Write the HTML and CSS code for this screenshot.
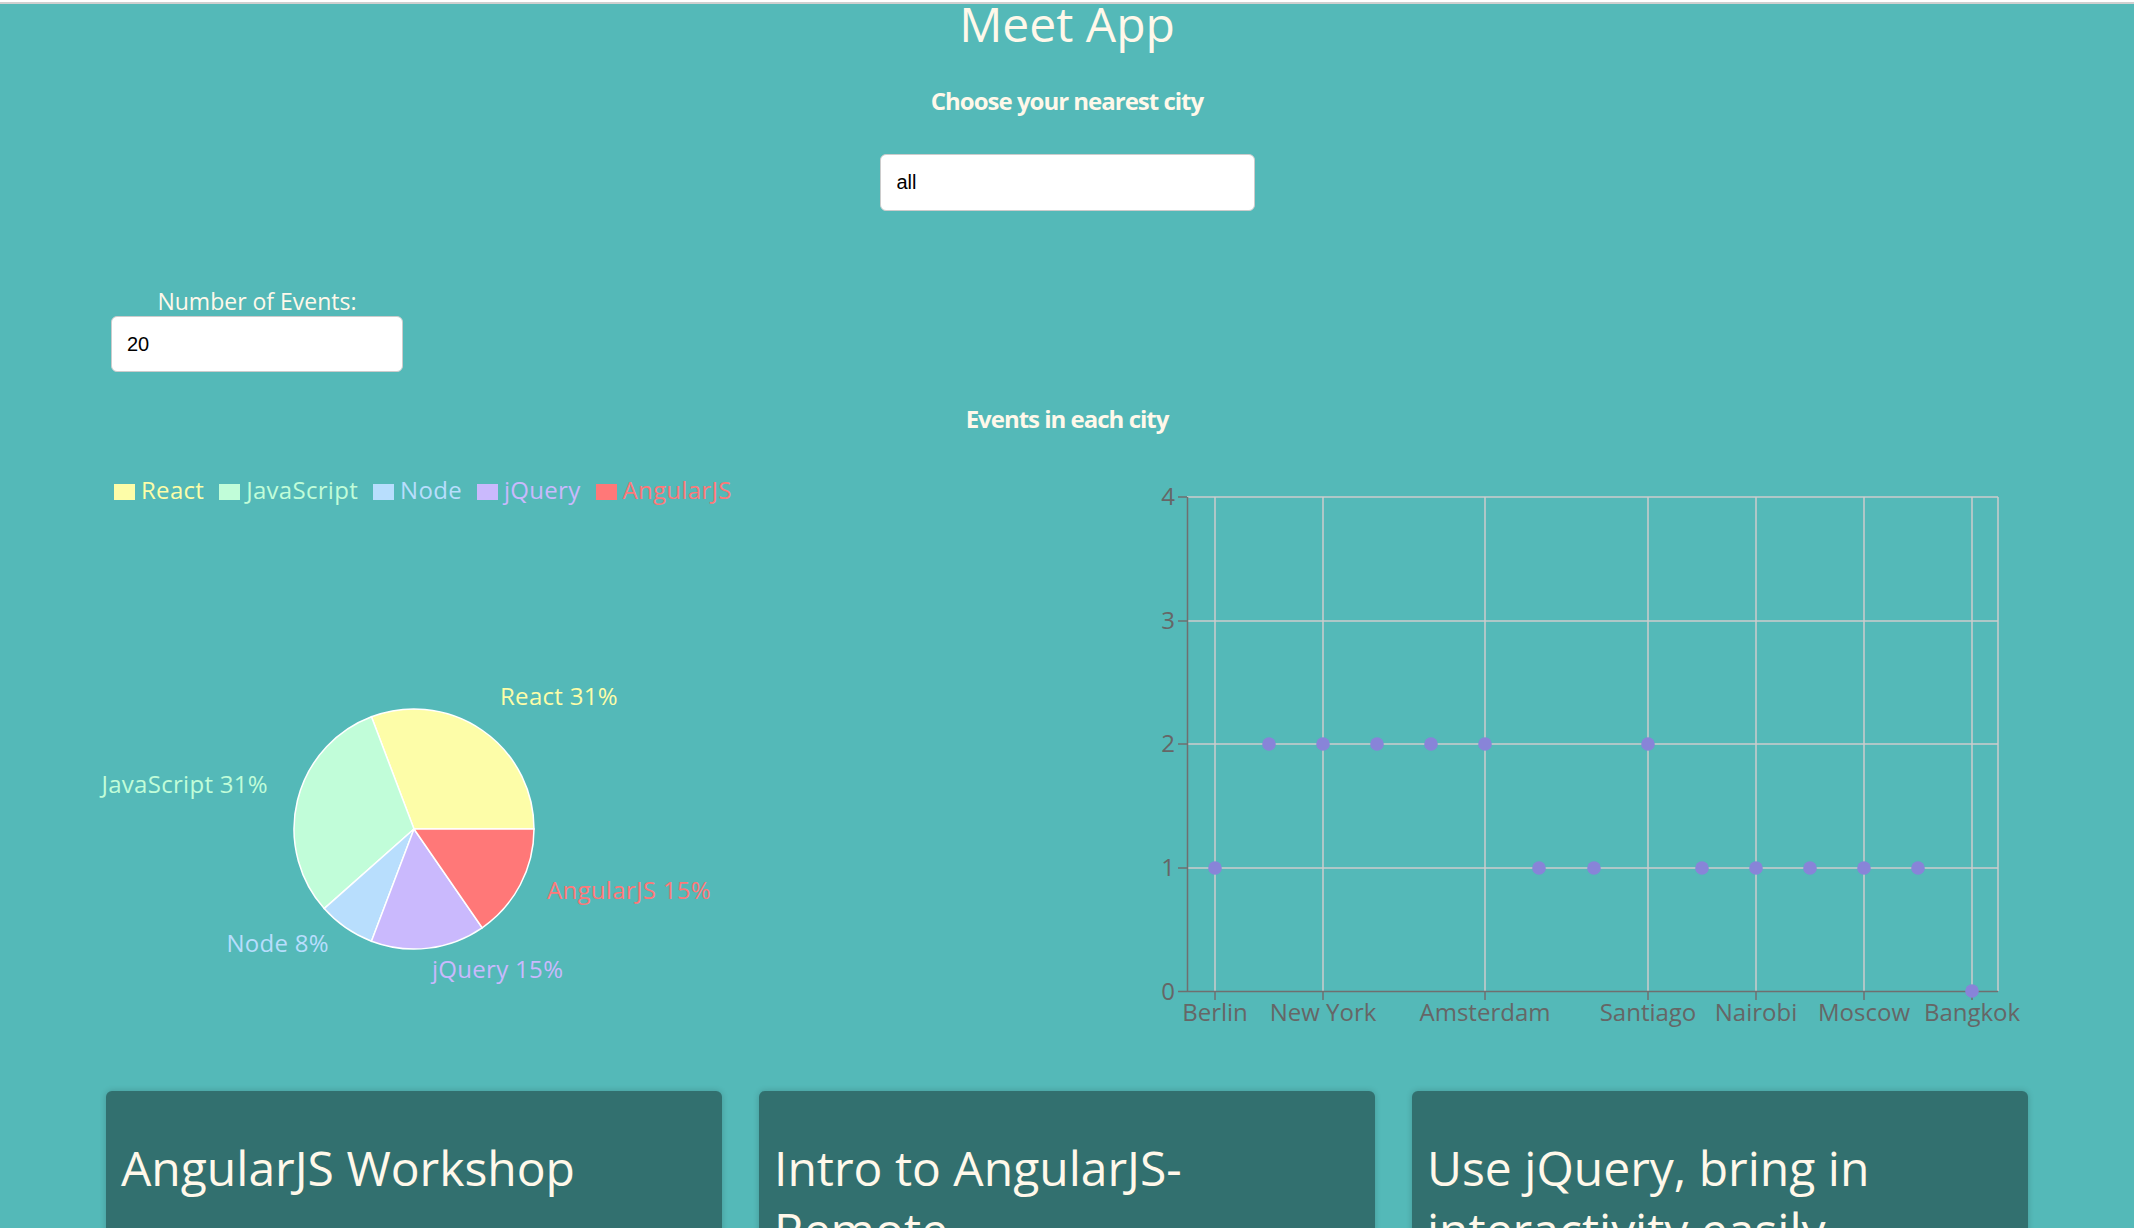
FILE: index.html
```html
<!DOCTYPE html>
<html lang="en">
<head>
<meta charset="utf-8">
<title>Meet App</title>
<link rel="stylesheet" href="styles.css">
</head>
<body>
<div class="app">
  <h1 class="title">Meet App</h1>

  <div class="city-search">
    <h3 class="section-heading choose">Choose your nearest city</h3>
    <input class="city-input" type="text" value="all">
  </div>

  <div class="number-of-events">
    <label class="noe-label">Number of Events:</label>
    <input class="noe-input" type="text" value="20">
  </div>

  <h3 class="section-heading charts-heading">Events in each city</h3>

  <div class="data-vis">
    <div class="pie-wrap">
      <ul class="legend">
        <li class="legend-item c-react"><span class="swatch"></span>React</li>
        <li class="legend-item c-js"><span class="swatch"></span>JavaScript</li>
        <li class="legend-item c-node"><span class="swatch"></span>Node</li>
        <li class="legend-item c-jquery"><span class="swatch"></span>jQuery</li>
        <li class="legend-item c-angular"><span class="swatch"></span>AngularJS</li>
      </ul>
      <svg class="pie" width="616" height="524" viewBox="106 506 616 524">
        <g stroke="#ffffff" stroke-width="1.5">
          <path fill="#fdfda8" d="M414,829 L534,829 A120,120 0 0 0 371.45,716.8 Z"/>
          <path fill="#c1fdd9" d="M414,829 L371.45,716.8 A120,120 0 0 0 324.18,908.57 Z"/>
          <path fill="#b8defd" d="M414,829 L324.18,908.57 A120,120 0 0 0 371.45,941.2 Z"/>
          <path fill="#cab9fd" d="M414,829 L371.45,941.2 A120,120 0 0 0 482.17,927.76 Z"/>
          <path fill="#ff7878" d="M414,829 L482.17,927.76 A120,120 0 0 0 534,829 Z"/>
        </g>
        <g class="pie-labels">
          <text x="500" y="705" fill="#fdfda8" text-anchor="start">React 31%</text>
          <text x="268" y="793" fill="#c1fdd9" text-anchor="end">JavaScript 31%</text>
          <text x="329" y="952" fill="#b8defd" text-anchor="end">Node 8%</text>
          <text x="432" y="978" fill="#cab9fd" text-anchor="start">jQuery 15%</text>
          <text x="547" y="899" fill="#ff7878" text-anchor="start">AngularJS 15%</text>
        </g>
      </svg>
    </div>

    <svg class="scatter" width="908" height="580" viewBox="1120 460 908 580">
      <g stroke="#cccccc" stroke-width="1.5">
        <line x1="1187" y1="497" x2="1998" y2="497"/>
        <line x1="1187" y1="621" x2="1998" y2="621"/>
        <line x1="1187" y1="744" x2="1998" y2="744"/>
        <line x1="1187" y1="868" x2="1998" y2="868"/>
        <line x1="1215" y1="497" x2="1215" y2="991"/>
        <line x1="1323" y1="497" x2="1323" y2="991"/>
        <line x1="1485" y1="497" x2="1485" y2="991"/>
        <line x1="1648" y1="497" x2="1648" y2="991"/>
        <line x1="1756" y1="497" x2="1756" y2="991"/>
        <line x1="1864" y1="497" x2="1864" y2="991"/>
        <line x1="1972" y1="497" x2="1972" y2="991"/>
        <line x1="1998" y1="497" x2="1998" y2="991"/>
      </g>
      <g stroke="#6f6f6f" stroke-width="1.5">
        <line x1="1187.5" y1="497" x2="1187.5" y2="992"/>
        <line x1="1187" y1="991.5" x2="1998" y2="991.5"/>
        <line x1="1178" y1="497" x2="1187" y2="497"/>
        <line x1="1178" y1="621" x2="1187" y2="621"/>
        <line x1="1178" y1="744" x2="1187" y2="744"/>
        <line x1="1178" y1="868" x2="1187" y2="868"/>
        <line x1="1178" y1="991.5" x2="1187" y2="991.5"/>
        <line x1="1215" y1="991" x2="1215" y2="1000"/>
        <line x1="1323" y1="991" x2="1323" y2="1000"/>
        <line x1="1485" y1="991" x2="1485" y2="1000"/>
        <line x1="1648" y1="991" x2="1648" y2="1000"/>
        <line x1="1756" y1="991" x2="1756" y2="1000"/>
        <line x1="1864" y1="991" x2="1864" y2="1000"/>
        <line x1="1972" y1="991" x2="1972" y2="1000"/>
      </g>
      <g class="axis-text" text-anchor="end">
        <text x="1175" y="505">4</text>
        <text x="1175" y="629">3</text>
        <text x="1175" y="752">2</text>
        <text x="1175" y="876">1</text>
        <text x="1175" y="1000">0</text>
      </g>
      <g class="axis-text" text-anchor="middle">
        <text x="1215" y="1021">Berlin</text>
        <text x="1323" y="1021">New York</text>
        <text x="1485" y="1021">Amsterdam</text>
        <text x="1648" y="1021">Santiago</text>
        <text x="1756" y="1021">Nairobi</text>
        <text x="1864" y="1021">Moscow</text>
        <text x="1972" y="1021">Bangkok</text>
      </g>
      <g fill="#8884d8">
        <circle cx="1215" cy="868" r="6.8"/>
        <circle cx="1269" cy="744" r="6.8"/>
        <circle cx="1323" cy="744" r="6.8"/>
        <circle cx="1377" cy="744" r="6.8"/>
        <circle cx="1431" cy="744" r="6.8"/>
        <circle cx="1485" cy="744" r="6.8"/>
        <circle cx="1539" cy="868" r="6.8"/>
        <circle cx="1594" cy="868" r="6.8"/>
        <circle cx="1648" cy="744" r="6.8"/>
        <circle cx="1702" cy="868" r="6.8"/>
        <circle cx="1756" cy="868" r="6.8"/>
        <circle cx="1810" cy="868" r="6.8"/>
        <circle cx="1864" cy="868" r="6.8"/>
        <circle cx="1918" cy="868" r="6.8"/>
        <circle cx="1972" cy="991" r="6.8"/>
      </g>
    </svg>
  </div>

  <ul class="event-list">
    <li class="event">
      <h2 class="event-title">AngularJS Workshop</h2>
      <p class="event-info">Berlin, Germany</p>
    </li>
    <li class="event">
      <h2 class="event-title">Intro to AngularJS-Remote</h2>
      <p class="event-info">New York, NY, USA</p>
    </li>
    <li class="event">
      <h2 class="event-title">Use jQuery, bring in interactivity easily</h2>
      <p class="event-info">Amsterdam, Netherlands</p>
    </li>
  </ul>
</div>
</body>
</html>
```

FILE: styles.css
```css
html {
  background: #ffffff;
  overflow: hidden;
}

body {
  margin: 2px 3px 0 0;
  border-top: 2px solid #d0d0d0;
  background: #54b9b8;
  min-height: 1300px;
  overflow: hidden;
  font-family: "Open Sans", "Noto Sans", sans-serif;
  color: #fff8ea;
}

.app {
  width: 1922px;
  margin: 0 auto;
}

.title {
  margin: 0;
  font-size: 48px;
  line-height: 40px;
  font-weight: 400;
  text-align: center;
}

.city-search {
  display: flex;
  flex-direction: column;
  align-items: center;
}

.section-heading {
  margin: 0;
  font-size: 24px;
  line-height: 32px;
  font-weight: 700;
  letter-spacing: -1px;
  text-align: center;
}

.choose {
  margin-top: 41px;
}

.city-input,
.noe-input {
  box-sizing: border-box;
  display: block;
  border: 1px solid #cccccc;
  border-radius: 6px;
  background: #ffffff;
  color: #000000;
  font-family: "Liberation Sans", Arial, sans-serif;
  font-size: 20px;
  padding: 0 16px;
  outline: none;
}

.city-input {
  margin-top: 37px;
  width: 375px;
  height: 57px;
}

.number-of-events {
  margin: 75px 0 0 5px;
  width: 292px;
  text-align: center;
}

.noe-label {
  display: block;
  font-size: 23px;
  line-height: 30px;
}

.noe-input {
  width: 292px;
  height: 56px;
  padding-left: 15px;
}

.charts-heading {
  margin-top: 31px;
}

.data-vis {
  margin-top: 25px;
  display: flex;
  justify-content: space-between;
  align-items: flex-start;
}

.pie-wrap {
  width: 616px;
  padding-top: 13px;
}

.legend {
  list-style: none;
  margin: 0;
  padding: 0 0 0 8px;
  display: flex;
  gap: 15px;
  font-size: 24px;
  line-height: 33px;
  letter-spacing: 0.3px;
}

.legend-item {
  display: flex;
  align-items: flex-start;
}

.swatch {
  width: 21px;
  height: 16px;
  margin: 11px 6px 0 0;
  background: currentColor;
}

.c-react { color: #fdfda8; }
.c-js { color: #c1fdd9; }
.c-node { color: #b8defd; }
.c-jquery { color: #cab9fd; }
.c-angular { color: #ff7878; }

.pie,
.scatter {
  display: block;
  overflow: visible;
}

.pie-labels text {
  font-family: "Open Sans", "Noto Sans", sans-serif;
  font-size: 24px;
  letter-spacing: 0.3px;
}

.axis-text {
  font-family: "Open Sans", "Noto Sans", sans-serif;
  font-size: 24px;
  fill: #666666;
}

.event-list {
  list-style: none;
  margin: 51px 0 0 0;
  padding: 0;
  display: grid;
  grid-template-columns: repeat(3, 616px);
  gap: 37px;
}

.event {
  background: #32706f;
  border-radius: 6px;
  padding: 6px 45px 20px 15px;
  box-shadow: 0 0 6px rgba(0, 0, 0, 0.18);
  min-height: 300px;
}

.event-title {
  margin: 40px 0 80px 0;
  font-size: 48px;
  line-height: 62px;
  font-weight: 400;
}

.event-info {
  margin: 0;
  font-size: 24px;
}
```
